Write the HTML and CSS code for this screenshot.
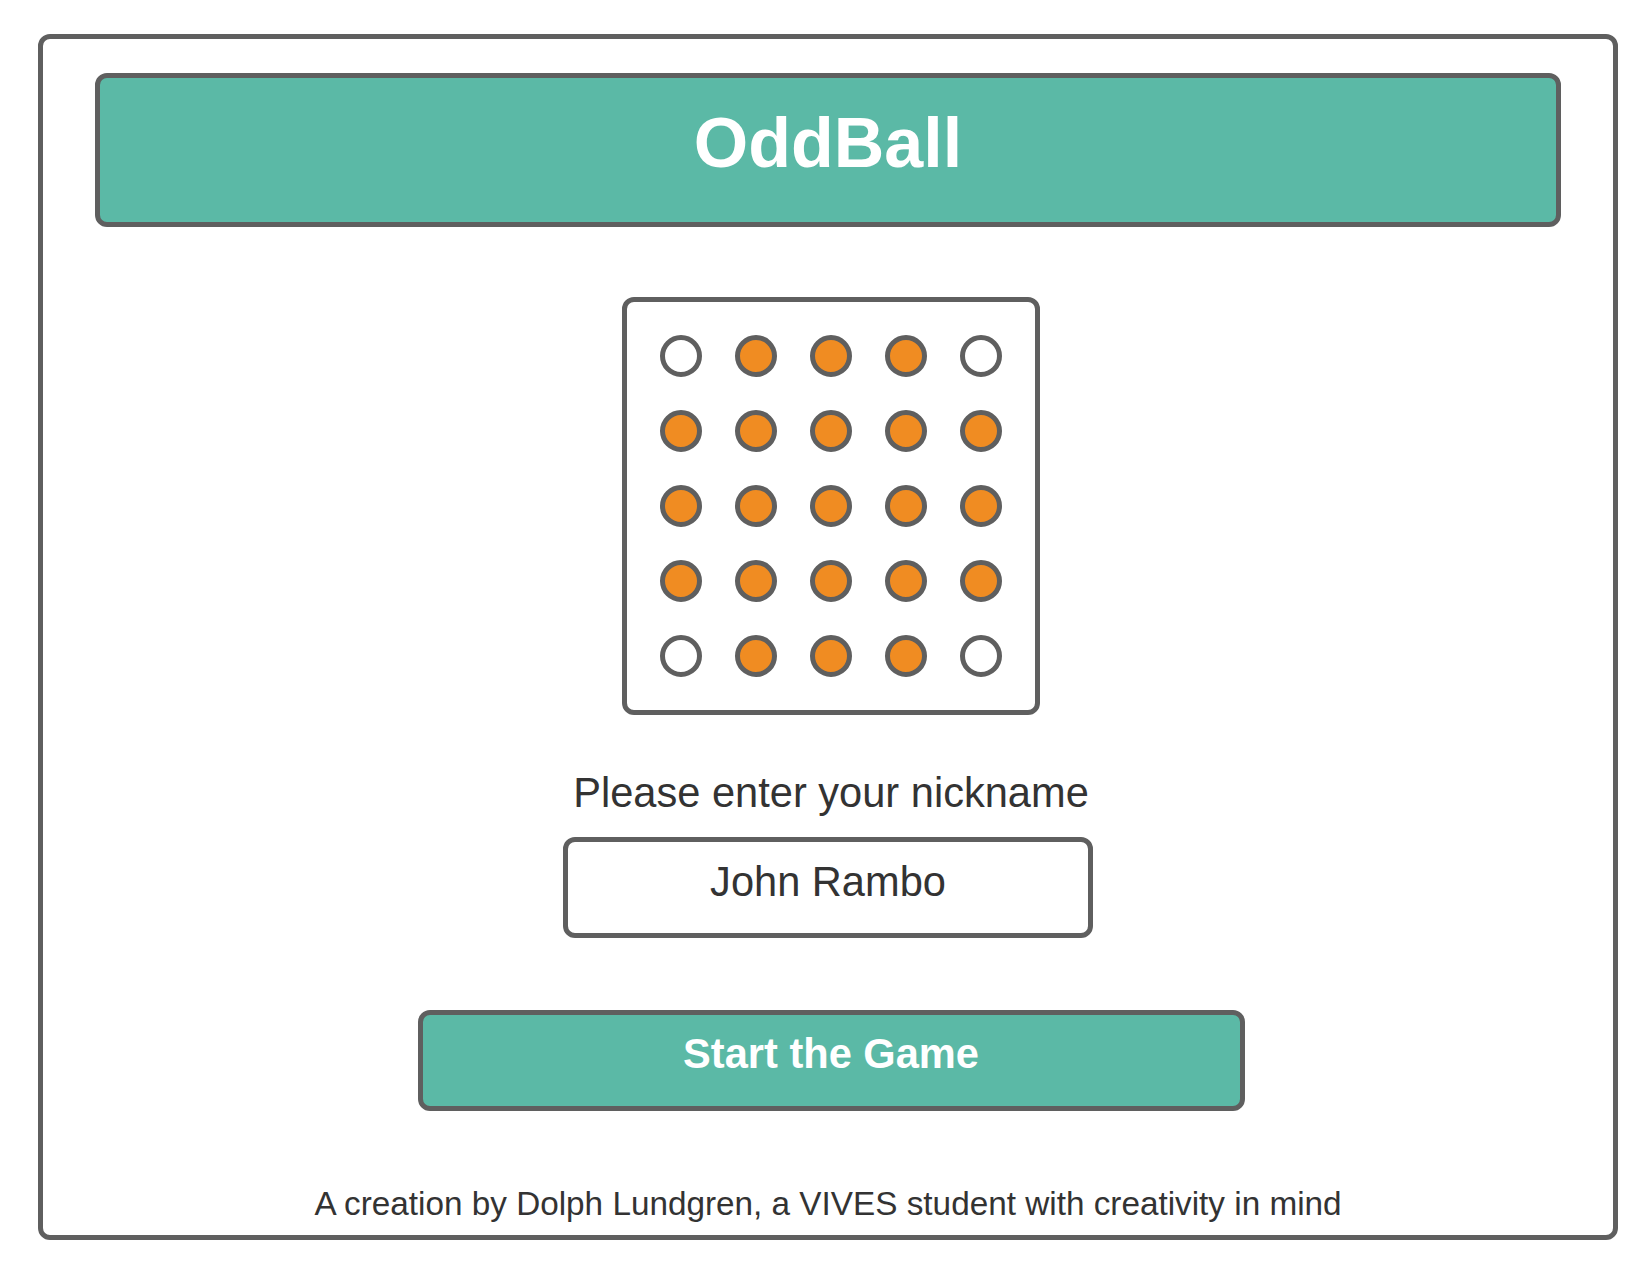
FILE: index.html
```html
<!DOCTYPE html>
<html lang="en">
<head>
<meta charset="utf-8">
<title>OddBall</title>
<link rel="stylesheet" href="styles.css">
</head>
<body>
<div class="frame">
  <header class="title-bar">
    <h1 class="title">OddBall</h1>
  </header>

  <div class="board">
    <span class="dot empty"></span><span class="dot"></span><span class="dot"></span><span class="dot"></span><span class="dot empty"></span>
    <span class="dot"></span><span class="dot"></span><span class="dot"></span><span class="dot"></span><span class="dot"></span>
    <span class="dot"></span><span class="dot"></span><span class="dot"></span><span class="dot"></span><span class="dot"></span>
    <span class="dot"></span><span class="dot"></span><span class="dot"></span><span class="dot"></span><span class="dot"></span>
    <span class="dot empty"></span><span class="dot"></span><span class="dot"></span><span class="dot"></span><span class="dot empty"></span>
  </div>

  <p class="label">Please enter your nickname</p>
  <div class="nick-input">John Rambo</div>

  <button class="start-btn" type="button">Start the Game</button>

  <p class="footer">A creation by Dolph Lundgren, a VIVES student with creativity in mind</p>
</div>
</body>
</html>
```

FILE: styles.css
```css
* {
  box-sizing: border-box;
}

html, body {
  margin: 0;
  padding: 0;
  background: #ffffff;
}

body {
  font-family: "Liberation Sans", Arial, sans-serif;
  color: #333333;
}

.frame {
  margin: 34px 0 0 38px;
  width: 1580px;
  height: 1206px;
  border: 5px solid #5f5f5f;
  border-radius: 12px;
  display: flex;
  flex-direction: column;
  align-items: center;
  padding-top: 34px;
}

.title-bar {
  width: 1466px;
  height: 154px;
  background: #5bb9a6;
  border: 5px solid #5f5f5f;
  border-radius: 12px;
  padding-top: 26px;
}

.title {
  margin: 0;
  text-align: center;
  color: #ffffff;
  font-size: 70px;
  line-height: 78px;
  font-weight: bold;
}

.board {
  margin-top: 70px;
  margin-left: 6px;
  display: grid;
  grid-template-columns: repeat(5, 42px);
  grid-auto-rows: 42px;
  gap: 33px;
  padding: 33px;
  border: 5px solid #5f5f5f;
  border-radius: 12px;
  background: #ffffff;
}

.dot {
  display: block;
  width: 42px;
  height: 42px;
  border-radius: 50%;
  border: 5px solid #5f5f5f;
  background: #f08c22;
}

.dot.empty {
  background: #ffffff;
}

.label {
  margin: 55px 0 0 6px;
  font-size: 41.6px;
  line-height: 46px;
  text-align: center;
}

.nick-input {
  margin-top: 21px;
  width: 530px;
  height: 101px;
  border: 5px solid #5f5f5f;
  border-radius: 12px;
  padding-top: 17px;
  font-size: 41.6px;
  line-height: 46px;
  text-align: center;
  color: #333333;
}

.start-btn {
  display: block;
  margin-top: 72px;
  margin-left: 6px;
  width: 827px;
  padding: 16px 0 29px 0;
  background: #5bb9a6;
  border: 5px solid #5f5f5f;
  border-radius: 12px;
  font-family: "Liberation Sans", Arial, sans-serif;
  font-size: 41.6px;
  line-height: 46px;
  font-weight: bold;
  color: #ffffff;
  text-align: center;
  cursor: pointer;
}

.footer {
  margin: 74px 0 0 0;
  font-size: 33.3px;
  line-height: 38px;
  text-align: center;
}
```
